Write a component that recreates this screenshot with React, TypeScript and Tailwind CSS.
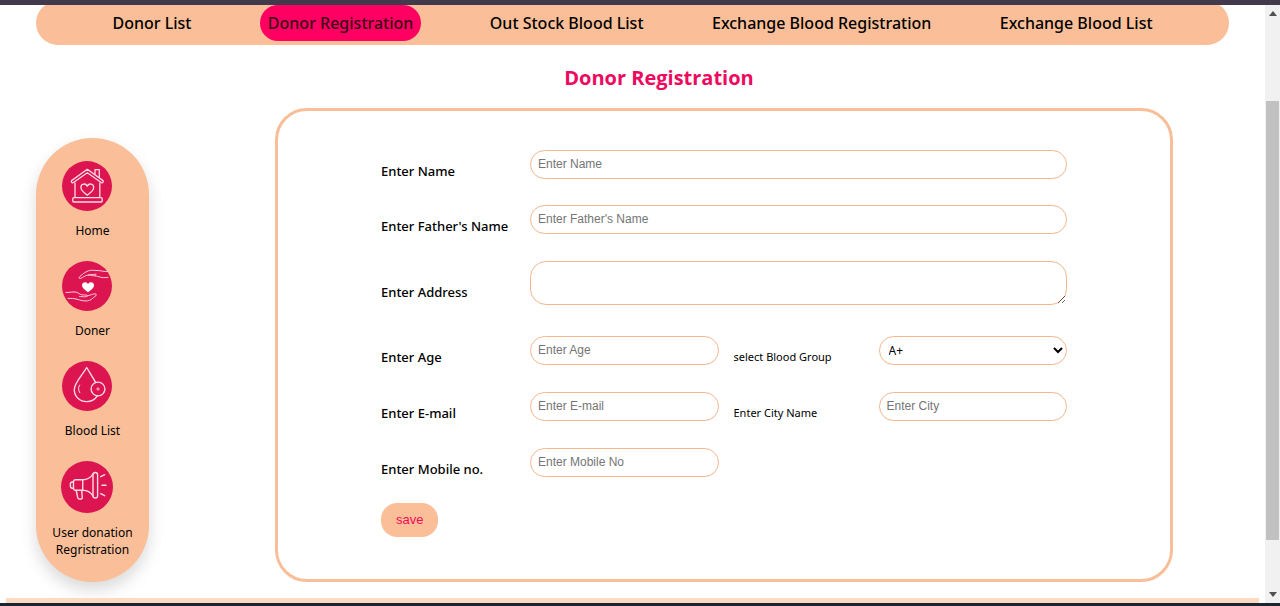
import type { ReactNode } from "react";

const navItems = [
  { label: "Donor List" },
  { label: "Donor Registration", active: true },
  { label: "Out Stock Blood List" },
  { label: "Exchange Blood Registration" },
  { label: "Exchange Blood List" },
];

const fieldClass =
  "mt-[7px] h-[29px] w-full rounded-full border border-[#f3b68d] bg-white px-[7px] pb-0.5 font-['Liberation_Sans',Arial,sans-serif] text-[12px] text-black outline-none placeholder:text-[#757575]";
const labelClass = "self-center text-[13px] leading-[18px] font-medium";
const sideLabelClass = "self-center pl-[15px] text-[11px] leading-[18px]";

function HomeIcon() {
  return (
    <svg viewBox="0 0 50 50" className="size-[50px]" fill="none" stroke="#ffdbe6" strokeWidth="1.3" strokeLinejoin="round" aria-hidden="true">
      <circle cx="25" cy="25" r="25" fill="#dc1450" stroke="none" />
      <path d="M25.3 8.3 9.6 19.6c-.8.8.3 2.6 1.5 2.1l14.2-9.9 14.2 9.9c1.2.5 2.3-1.3 1.5-2.1z" />
      <path d="M33 13.6V8.6h4.3v8.2M13 21.4v15M37.8 21.4v15" />
      <rect x="10.8" y="36.6" width="29.4" height="4.4" rx="1" />
      <path d="M25.3 34.2c-3.5-2.4-6.4-4.6-6.4-7.9 0-3.7 4.7-4.5 6.4-1.2 1.7-3.3 6.4-2.5 6.4 1.2 0 3.3-2.9 5.5-6.4 7.9z" />
    </svg>
  );
}

function HandsIcon() {
  return (
    <svg viewBox="0 0 50 50" className="size-[50px]" fill="none" stroke="#ffcfdd" strokeWidth="1" strokeLinecap="round" strokeLinejoin="round" aria-hidden="true">
      <circle cx="25" cy="25" r="25" fill="#dc1450" stroke="none" />
      <path d="M46 10.3c-4 1-7-1-11-.8-3 .1-5.500-.8-8.500.3-3.500 1.200-7 4.200-9.200 6.200-.9 1 .2 1.800 1.300 1.400 2.600-.9 4.400-2.900 7.400-3.400 2.500-.2 4.500 1.100 7.500.9M26.500 14c2-.8 5.500-.2 7.500-.8M33.500 14.900c3.500.4 5.500 2.600 12.500 1.400" />
      <path d="M4 31.500c4.500.2 7-1.200 10.500-.2 2.500.8 3.500 2.400 6 2.600 2 .2 5-.2 5 .9 0 1.400-4.500 1-8 .6M25.500 34.800c2.500-.2 5.500-2.300 8-1.900 1.300.3.800 1.700-.3 2.400-2.500 1.700-4.700 4.400-7.700 4.600-4 .3-7-.6-10.500-1.700-2.500-.8-6-.8-9-.8" />
      <path fill="#fff" stroke="none" d="M26 31.200c-3.300-2.400-6-4.300-6-7 0-3.500 4.500-4.100 6-1.200 1.500-2.900 6-2.300 6 1.200 0 2.700-2.700 4.600-6 7z" />
    </svg>
  );
}

function DropIcon() {
  return (
    <svg viewBox="0 0 50 50" className="size-[50px]" fill="none" stroke="#ffdbe6" strokeWidth="1.4" strokeLinecap="round" strokeLinejoin="round" aria-hidden="true">
      <circle cx="25" cy="25" r="25" fill="#dc1450" stroke="none" />
      <path d="M33.600 21.400C31 16.500 27.500 11.500 24.700 6.500 20.500 14 12.300 21.500 12.300 28.600c0 7 5.500 12 12.400 12 4.600 0 8.500-2.300 10.600-5.700" />
      <path d="M17.600 24c-1.500 2.300-1.400 5.300.2 7.700" strokeWidth="1" />
      <circle cx="36" cy="28" r="6.900" />
      <path d="M34.600 28h2.800M36 26.600v2.800" strokeWidth=".8" />
    </svg>
  );
}

function MegaphoneIcon() {
  return (
    <svg viewBox="0 0 52 52" className="size-[52px]" fill="none" stroke="#ffdbe6" strokeWidth="1.400" strokeLinecap="round" strokeLinejoin="round" aria-hidden="true">
      <circle cx="26" cy="26" r="26" fill="#dc1450" stroke="none" />
      <rect x="32" y="11.500" width="4.600" height="25.500" rx="2.300" />
      <path d="M21.700 18.700h-7c-1.400 0-2.200.8-2.200 2v6.600c0 1.200.8 2 2.200 2h7zM12.500 21h-1.300c-1.300 0-1.900 1.300-1.900 3s.6 3.300 1.900 3.300h1.300" />
      <path d="M21.700 18.700c4.300 0 8-2 10.300-5.700M21.700 29.300c4.300 0 8 2 10.300 5.700" />
      <path d="m15.200 29.500 1.600 7.300c.5 2 4.800 1.700 4.500-.3l-.6-7" />
      <path d="m39.700 15.700 4-2M41 24.300h4M39.700 32.700l4 2" />
    </svg>
  );
}

function SideLink({ icon, children }: { icon: ReactNode; children: ReactNode }) {
  return (
    <a href="#" className="flex flex-col items-center">
      <span className="mr-3">{icon}</span>
      <span className="mt-[11px] text-center text-[12px] leading-[17px]">{children}</span>
    </a>
  );
}

function ScrollRail() {
  return (
    <div className="flex w-[15px] shrink-0 flex-col items-center justify-between bg-[#f1f1f1] py-1.5" aria-hidden="true">
      <svg viewBox="0 0 8 5" className="h-[5px] w-2"><path d="M0 5 4 0l4 5z" fill="#505050" /></svg>
      <div className="mt-[85px] mb-[52px] w-[13px] grow bg-[#c1c1c1]" />
      <svg viewBox="0 0 8 5" className="h-[5px] w-2"><path d="m0 0 4 5 4-5z" fill="#505050" /></svg>
    </div>
  );
}

export default function App() {
  return (
    <div className="flex min-h-screen flex-col bg-white font-['Noto_Sans','Open_Sans',sans-serif] text-black">
      <div className="h-[5px] bg-[#43394d]" />
      <div className="flex grow">
        <div className="flex min-w-0 grow flex-col overflow-hidden">
          <nav className="-mt-1 mr-9 ml-9 flex h-11 items-center justify-evenly rounded-full bg-[#fabf98] px-2">
            {navItems.map((item) => (
              <a
                key={item.label}
                href="#"
                className={
                  item.active
                    ? "rounded-full bg-[#ff0062] px-2 py-1.5 text-base leading-6 font-medium whitespace-nowrap text-[#3b0018]"
                    : "text-base leading-6 font-medium whitespace-nowrap"
                }
              >
                {item.label}
              </a>
            ))}
          </nav>

          <h1 className="mt-[19px] pl-[53px] text-center font-['Open_Sans','Noto_Sans',sans-serif] text-xl leading-7 font-bold text-[#ee0860]">
            Donor Registration
          </h1>

          <div className="mt-4 flex items-start pr-[92px] pl-9">
            <aside className="mt-[30px] flex w-[113px] shrink-0 flex-col gap-[22px] rounded-full bg-[#fabf98] pt-[23px] pb-6 shadow-[0_8px_16px_rgba(0,0,0,0.15)]">
              <SideLink icon={<HomeIcon />}>Home</SideLink>
              <SideLink icon={<HandsIcon />}>Doner</SideLink>
              <SideLink icon={<DropIcon />}>Blood List</SideLink>
              <SideLink icon={<MegaphoneIcon />}>
                User donation
                <br />
                Regristration
              </SideLink>
            </aside>

            <form className="ml-[126px] min-w-0 grow rounded-[32px] border-3 border-[#f8be98] px-[103px] pt-8 pb-[42px]">
              <div className="grid grid-cols-[149px_1fr_160px_1fr] grid-rows-[55px_56px_75px_56px_56px_56px] items-start">
                <label htmlFor="name" className={labelClass}>Enter Name</label>
                <div className="col-span-3"><input id="name" placeholder="Enter Name" className={fieldClass} /></div>

                <label htmlFor="father" className={labelClass}>Enter Father's Name</label>
                <div className="col-span-3"><input id="father" placeholder="Enter Father's Name" className={fieldClass} /></div>

                <label htmlFor="address" className={labelClass}>Enter Address</label>
                <textarea
                  id="address"
                  className="col-span-3 mt-[7px] h-11 w-full rounded-2xl border border-[#f3b68d] bg-white px-[7px] text-[12px] outline-none"
                />

                <label htmlFor="age" className={labelClass}>Enter Age</label>
                <input id="age" placeholder="Enter Age" className={fieldClass} />
                <label htmlFor="group" className={sideLabelClass}>select Blood Group</label>
                <select
                  id="group"
                  className="mt-[7px] h-[29px] w-full rounded-full border border-[#f3b68d] bg-white px-[5px] text-[12px] outline-none"
                >
                  <option>A+</option>
                  <option>A-</option>
                  <option>B+</option>
                  <option>B-</option>
                  <option>AB+</option>
                  <option>AB-</option>
                  <option>O+</option>
                  <option>O-</option>
                </select>

                <label htmlFor="email" className={labelClass}>Enter E-mail</label>
                <input id="email" type="email" placeholder="Enter E-mail" className={fieldClass} />
                <label htmlFor="city" className={sideLabelClass}>Enter City Name</label>
                <input id="city" placeholder="Enter City" className={fieldClass} />

                <label htmlFor="mobile" className={labelClass}>Enter Mobile no.</label>
                <input id="mobile" type="tel" placeholder="Enter Mobile No" className={fieldClass} />
              </div>
              <button
                type="button"
                className="mt-1.5 block h-[34px] rounded-2xl bg-[#fabf98] px-[15px] font-['Liberation_Sans',Arial,sans-serif] text-[13px] text-[#f50a55]"
              >
                save
              </button>
            </form>
          </div>

          <div className="mx-1.5 mt-auto h-[5px] bg-[#fcd9c0]" />
        </div>
        <ScrollRail />
      </div>
      <div className="h-[3px] bg-[#1b2530]" />
    </div>
  );
}
